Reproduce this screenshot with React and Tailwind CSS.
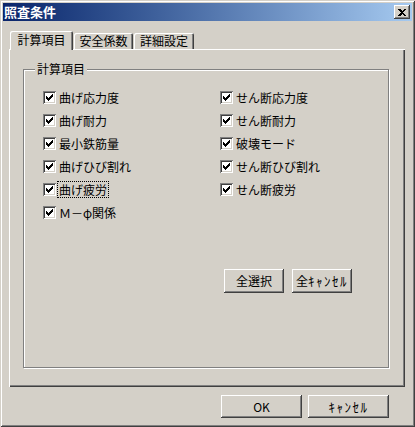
import React from 'react';

const font = { fontFamily: '"Noto Sans CJK JP", "Noto Sans", sans-serif' };

const leftItems = ['曲げ応力度', '曲げ耐力', '最小鉄筋量', '曲げひび割れ', '曲げ疲労', 'Ｍ－φ関係'];
const rightItems = ['せん断応力度', 'せん断耐力', '破壊モード', 'せん断ひび割れ', 'せん断疲労'];

const CheckMark = () => (
  <svg width="7" height="7" viewBox="0 0 7 7" shapeRendering="crispEdges">
    <polygon points="0,2 2,4 7,-1 7,2 2,7 0,5" fill="#000" />
  </svg>
);

const CheckItem = ({ label, focused }) => (
  <div className="flex items-center h-[23px]">
    <span className="flex items-center justify-center w-[13px] h-[13px] bg-white shadow-[inset_1px_1px_#808080,inset_-1px_-1px_#fff,inset_2px_2px_#404040,inset_-2px_-2px_#d4d0c8]">
      <CheckMark />
    </span>
    <span
      className={
        'ml-[1px] px-[1px] py-px leading-[13px] text-[12px] text-black border ' +
        (focused ? 'border-dotted border-black' : 'border-transparent')
      }
    >
      {label}
    </span>
  </div>
);

const Button = ({ children, className }) => (
  <button
    className={
      'flex items-center justify-center text-[12px] text-black bg-[#d4d0c8] shadow-[inset_-1px_-1px_#404040,inset_1px_1px_#fff,inset_-2px_-2px_#808080,inset_2px_2px_#d4d0c8] ' +
      className
    }
  >
    {children}
  </button>
);

// 半角カナは少し広めに
const Kana = ({ children }) => <span className="tracking-[1.5px] text-[13px]">{children}</span>;

const App = () => {
  return (
    <div
      className="w-[415px] h-[427px] p-[3px] flex flex-col bg-[#d4d0c8] shadow-[inset_1px_1px_#d4d0c8,inset_-1px_-1px_#404040,inset_2px_2px_#fff,inset_-2px_-2px_#808080]"
      style={font}
    >
      {/* タイトルバー */}
      <div className="h-[18px] flex items-center justify-between pl-[1px] pr-[2px] bg-gradient-to-r from-[#0a246a] to-[#a6caf0]">
        <span className="text-white font-bold text-[13px] leading-[18px]">照査条件</span>
        <span className="flex items-center justify-center w-[16px] h-[14px] bg-[#d4d0c8] shadow-[inset_-1px_-1px_#404040,inset_1px_1px_#fff,inset_-2px_-2px_#808080,inset_2px_2px_#d4d0c8]">
          <svg width="8" height="7" viewBox="0 0 8 7" shapeRendering="crispEdges">
            <path d="M0 0h2l2 2l2-2h2l-3 3.5l3 3.5h-2l-2-2l-2 2h-2l3-3.5z" fill="#000" />
          </svg>
        </span>
      </div>

      {/* タブ */}
      <div className="ml-[6px] mt-[10px] w-[396px]">
        <div className="flex items-end h-[18px] pl-[1px] text-[12px] text-black">
          <div className="relative z-10 -mb-px w-[63px] h-[19px] flex justify-center pt-[2px] leading-[14px] bg-[#d4d0c8] rounded-t-[2px] shadow-[inset_1px_1px_#fff,inset_-1px_0_#404040,inset_-2px_0_#808080]">
            計算項目
          </div>
          <div className="ml-px w-[59px] h-[16px] flex justify-center pt-[1px] leading-[14px] rounded-t-[2px] shadow-[inset_1px_1px_#fff,inset_-1px_0_#404040,inset_-2px_0_#808080]">
            安全係数
          </div>
          <div className="ml-px w-[60px] h-[16px] flex justify-center pt-[1px] leading-[14px] rounded-t-[2px] shadow-[inset_1px_1px_#fff,inset_-1px_0_#404040,inset_-2px_0_#808080]">
            詳細設定
          </div>
        </div>

        <div className="h-[338px] pt-[20px] pl-[14px] shadow-[inset_1px_1px_#fff,inset_-1px_-1px_#404040,inset_-2px_-2px_#808080]">
          {/* グループボックス */}
          <div className="relative w-[366px] h-[299px] border border-[#808080] shadow-[inset_1px_1px_#fff,1px_1px_#fff] pt-[16px] pl-[19px]">
            <span className="absolute left-[11px] -top-[8px] px-[2px] bg-[#d4d0c8] text-[12px] leading-[14px] text-black">
              計算項目
            </span>
            <div className="flex">
              <div className="w-[177px] flex flex-col">
                {leftItems.map((item) => (
                  <CheckItem key={item} label={item} focused={item === '曲げ疲労'} />
                ))}
              </div>
              <div className="flex flex-col">
                {rightItems.map((item) => (
                  <CheckItem key={item} label={item} />
                ))}
              </div>
            </div>
            <div className="flex justify-end gap-[8px] pr-[36px] mt-[45px]">
              <Button className="w-[60px] h-[24px]">全選択</Button>
              <Button className="w-[60px] h-[24px]">
                全<Kana>ｷｬﾝｾﾙ</Kana>
              </Button>
            </div>
          </div>
        </div>
      </div>

      {/* OK / キャンセル */}
      <div className="flex justify-end gap-[6px] pr-[23px] mt-[8px]">
        <Button className="w-[81px] h-[23px]">OK</Button>
        <Button className="w-[81px] h-[23px]">
          <Kana>ｷｬﾝｾﾙ</Kana>
        </Button>
      </div>
    </div>
  );
};

export default App;
